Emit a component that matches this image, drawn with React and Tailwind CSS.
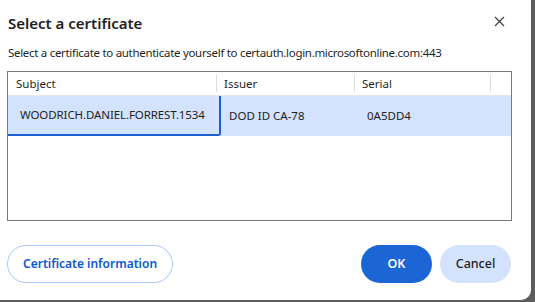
import React, { useState } from "react";

const rows = [
    { subject: "WOODRICH.DANIEL.FORREST.1534", issuer: "DOD ID CA-78", serial: "0A5DD4" },
];

const App = () => {
    const [selected, setSelected] = useState(0);

    return (
        <div className="w-[535px] h-[302px] bg-[#5c5c5c] overflow-hidden" style={{ fontFamily: '"Noto Sans", "Open Sans", sans-serif' }}>
            <div className="w-[531px] h-[300px] bg-white rounded-br-[10px] flex flex-col text-[#1f1f1f]">
                {/* Header */}
                <div className="flex items-start justify-between pl-[8px] pr-[26px] pt-[12px]">
                    <h1 className="text-[15px] font-semibold leading-[22px]">Select a certificate</h1>
                    <button className="mt-[4px] text-[#444]">
                        <svg width="11" height="11" viewBox="0 0 11 11" stroke="currentColor" strokeWidth="1.3">
                            <path d="M1 1L10 10M10 1L1 10" />
                        </svg>
                    </button>
                </div>
                <p className="pl-[8px] mt-[11px] text-[11.5px] leading-[16px] tracking-[-0.3px]">
                    Select a certificate to authenticate yourself to certauth.login.microsoftonline.com:443
                </p>

                {/* Certificate table */}
                <div className="ml-[7px] mt-[10px] w-[505px] h-[150px] border border-[#7a7a7a] text-[11.5px]">
                    <div className="flex h-[24px] items-center border-b border-[#e5e5e5]">
                        <div className="w-[209px] pl-[8px] border-r border-[#dcdcdc] h-[17px] leading-[17px]">Subject</div>
                        <div className="w-[138px] pl-[7px] border-r border-[#dcdcdc] h-[17px] leading-[17px]">Issuer</div>
                        <div className="w-[136px] pl-[7px] border-r border-[#dcdcdc] h-[17px] leading-[17px]">Serial</div>
                    </div>
                    {rows.map((row, idx) => (
                        <div
                            key={row.serial}
                            onClick={() => setSelected(idx)}
                            className={`flex h-[40px] ${selected === idx ? "bg-[#d3e3fd]" : ""}`}
                        >
                            <div className="w-[213px] pl-[12px] flex items-center border-r-2 border-b-2 border-[#1a60d0] rounded-br-[3px] tracking-[-0.1px]">
                                {row.subject}
                            </div>
                            <div className="w-[138px] pl-[8px] flex items-center">{row.issuer}</div>
                            <div className="pl-[8px] flex items-center">{row.serial}</div>
                        </div>
                    ))}
                </div>

                {/* Buttons */}
                <div className="flex items-center justify-between pl-[7px] pr-[20px] mt-[24px]">
                    <button className="h-[38px] px-[15px] rounded-full border border-[#a8c7fa] text-[#0b57d0] text-[12px] font-semibold">
                        Certificate information
                    </button>
                    <div className="flex gap-[8px]">
                        <button className="h-[38px] w-[71px] rounded-full bg-[#1b66d4] text-white text-[12.5px] font-semibold">
                            OK
                        </button>
                        <button className="h-[38px] w-[71px] rounded-full bg-[#d3e3fd] text-[#1f1f1f] text-[12.5px] font-medium">
                            Cancel
                        </button>
                    </div>
                </div>
            </div>
        </div>
    );
};

export default App;
